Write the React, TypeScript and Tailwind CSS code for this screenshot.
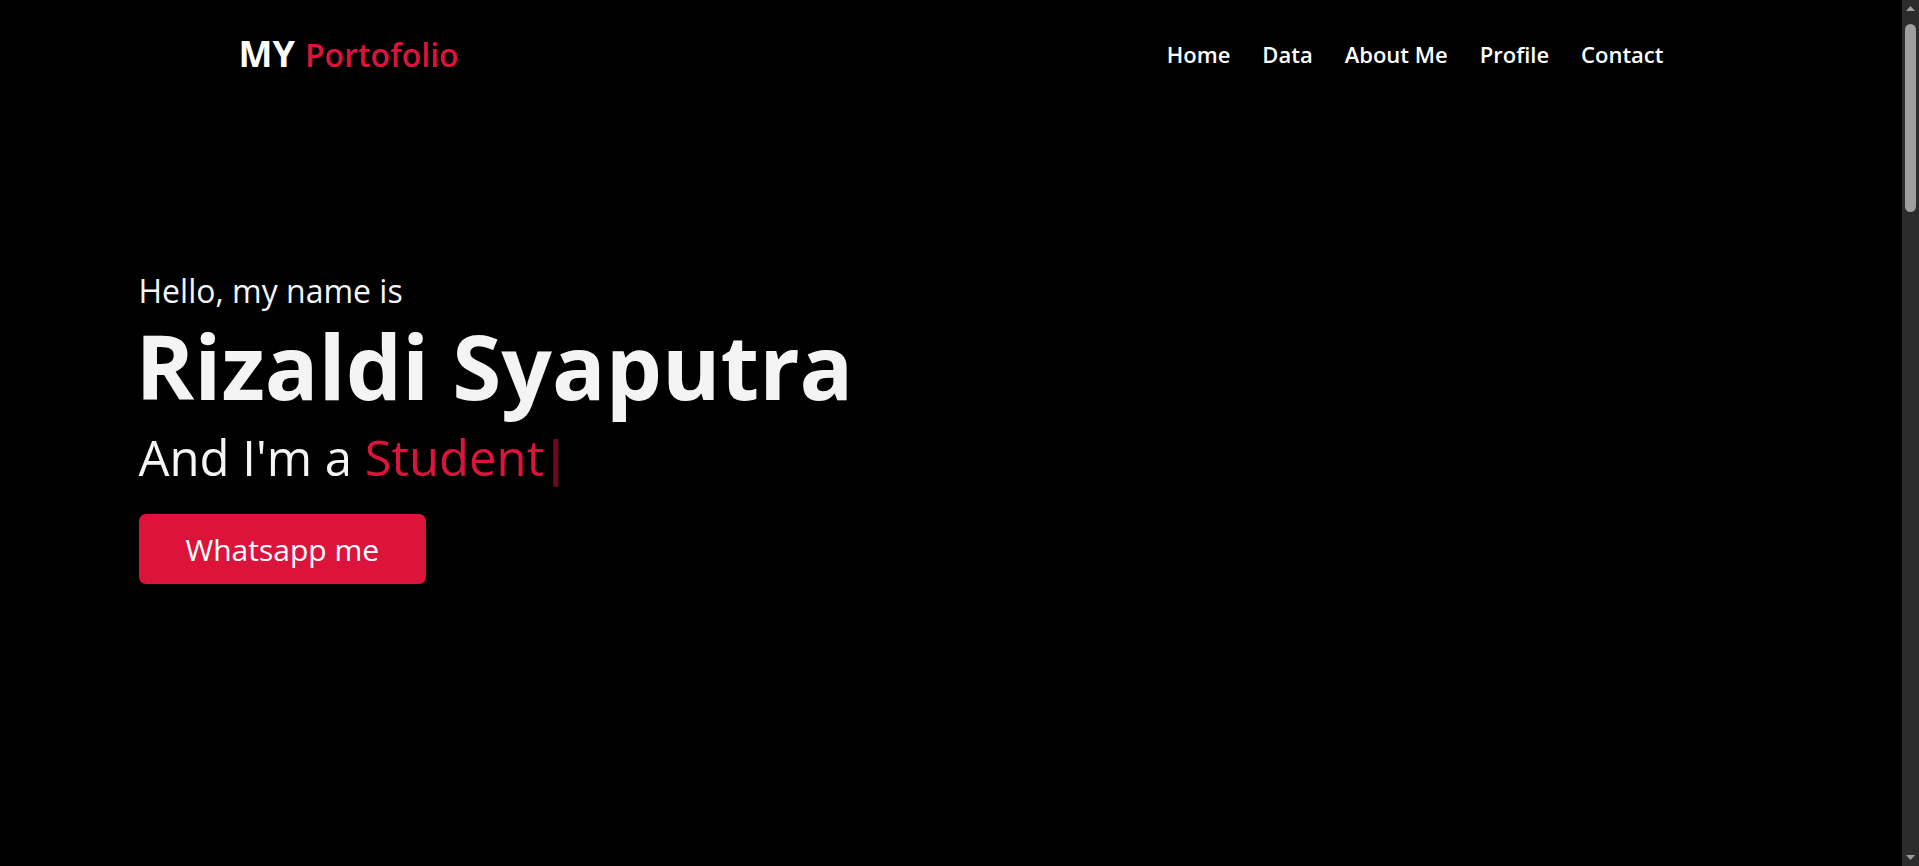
import { useEffect, useState } from "react";

const links = ["Home", "Data", "About Me", "Profile", "Contact"];

// the window scrollbar from the screenshot, drawn since the browser hides its own
function Scrollbar() {
  return (
    <div className="w-[17px] shrink-0 bg-[#2c2c2c] flex flex-col items-center">
      <svg width="17" height="17" viewBox="0 0 17 17" className="shrink-0">
        <path d="M4 11 L8.5 6 L13 11 Z" fill="#9d9d9d" />
      </svg>
      <div className="mt-[7px] w-[11px] h-[188px] rounded-full bg-[#9f9f9f]" />
      <div className="flex-1" />
      <svg width="17" height="17" viewBox="0 0 17 17" className="shrink-0">
        <path d="M4 6 L8.5 11 L13 6 Z" fill="#9d9d9d" />
      </svg>
    </div>
  );
}

export default function App() {
  const [blink, setBlink] = useState(true);

  useEffect(() => {
    const t = setInterval(() => setBlink((b) => !b), 100000);
    return () => clearInterval(t);
  }, []);

  return (
    <div className="h-[866px] flex bg-black text-white font-['Open_Sans','Noto_Sans',sans-serif] overflow-hidden">
      <main className="flex-1 min-w-0">
        <header className="w-full max-w-[1625px] mx-auto px-[100px] pt-[32px] flex justify-between items-start">
          <a href="#home" className="mt-[4px] flex items-baseline leading-none">
            <span className="text-[36px] font-bold text-white">MY</span>
            <span className="ml-[10px] text-[32px] font-semibold text-[#dc143c]">Portofolio</span>
          </a>
          <nav className="mt-[7px] flex gap-[32px]">
            {links.map((l) => (
              <a key={l} href="#" className="text-[22px] leading-[30px] font-semibold text-white">
                {l}
              </a>
            ))}
          </nav>
        </header>

        <section id="home" className="w-full max-w-[1625px] mx-auto pt-[199px]">
          <div className="text-[32px] leading-[40px] text-[#f5f5f5]">Hello, my name is</div>
          <div className="text-[89px] leading-[110px] font-bold text-[#f4f4f4] -ml-[3px]">
            Rizaldi Syaputra
          </div>
          <div className="text-[49px] leading-[72px] text-[#f5f5f5]">
            And I'm a <span className="text-[#dc143c] font-medium">Student</span>
            <span className={blink ? "-ml-[2px] font-bold text-[#dc143c] opacity-50" : "opacity-0"}>|</span>
          </div>
          <a
            href="#"
            className="mt-[21px] inline-flex items-center h-[70px] px-[45px] text-[30px] text-white bg-[#dc143c] border-2 border-[#dc143c] rounded-[7px]"
          >
            Whatsapp me
          </a>
        </section>
      </main>
      <Scrollbar />
    </div>
  );
}
